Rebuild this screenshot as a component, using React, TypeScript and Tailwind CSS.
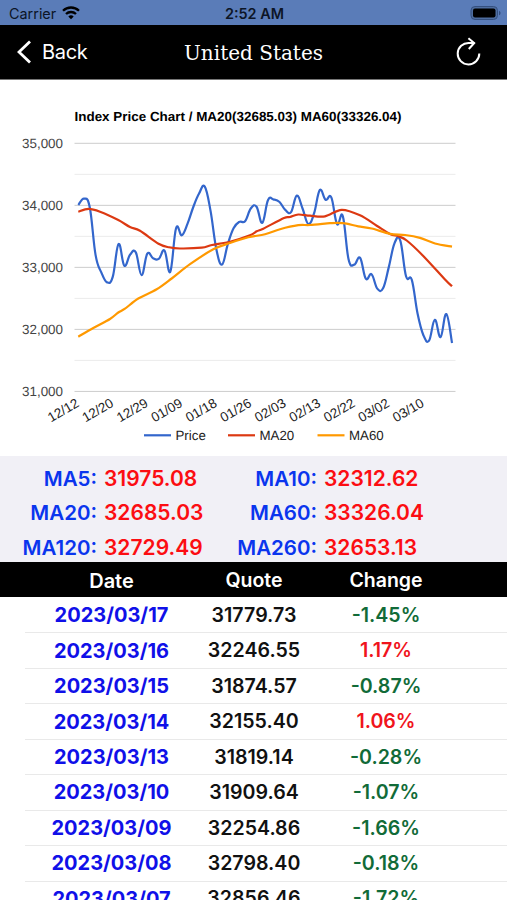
interface Quote {
  date: string;
  quote: string;
  change: string;
}

const averages = [
  ["MA5:", "31975.08", "MA10:", "32312.62"],
  ["MA20:", "32685.03", "MA60:", "33326.04"],
  ["MA120:", "32729.49", "MA260:", "32653.13"],
];

const quotes: Quote[] = [
  { date: "2023/03/17", quote: "31779.73", change: "-1.45%" },
  { date: "2023/03/16", quote: "32246.55", change: "1.17%" },
  { date: "2023/03/15", quote: "31874.57", change: "-0.87%" },
  { date: "2023/03/14", quote: "32155.40", change: "1.06%" },
  { date: "2023/03/13", quote: "31819.14", change: "-0.28%" },
  { date: "2023/03/10", quote: "31909.64", change: "-1.07%" },
  { date: "2023/03/09", quote: "32254.86", change: "-1.66%" },
  { date: "2023/03/08", quote: "32798.40", change: "-0.18%" },
  { date: "2023/03/07", quote: "32856.46", change: "-1.72%" },
];

// one close per trading day, 12/12 to 03/17
const closes = [
  34005, 34109, 33966, 33202, 32920, 32758, 32850, 33376, 33027, 33204, 33242,
  32876, 33221, 33147, 33136, 33270, 32930, 33631, 33518, 33704, 33973, 34190,
  34303, 33911, 33297, 33045, 33375, 33630, 33734, 33744, 33949, 33978, 33717,
  34086, 34093, 34054, 33926, 33891, 34157, 33949, 33700, 33869, 34246, 34089,
  34128, 33697, 33827, 33130, 33045, 33154, 32817, 32889, 32657, 32662, 33004,
  33391, 33431, 32856, 32798, 32255, 31910, 31819, 32155, 31875, 32247, 31780,
];

type Point = [number, number];

const ma20: Point[] = [
  [78.3, 211.7], [88.5, 208.9], [100, 211.7], [118.3, 220], [130, 227], [140, 230.7],
  [158.5, 243.7], [169, 247.3], [180, 248.5], [201.7, 247.7], [212, 245], [230, 241.7],
  [250, 235.3], [256.7, 231.3], [263.3, 228.7], [284, 218], [290, 217], [298.3, 214.5],
  [310, 215.7], [325, 216.3], [341.7, 209.8], [360, 215.3], [376.7, 225.7], [390, 234],
  [398.3, 236.3], [406.7, 240.5], [423, 255.7], [445, 279.5], [452, 286.3],
];

const ma60: Point[] = [
  [78.3, 336.7], [93.3, 328], [110, 319], [118.3, 312.5], [125, 308.7], [138.3, 298.5],
  [156.7, 289.3], [171.7, 278.5], [190, 264.2], [213.3, 249.3], [230, 243], [248.3, 237.3],
  [265, 234.3], [280, 229.2], [298.3, 225.2], [310, 225], [330, 223.2], [338, 222.8],
  [346.7, 223.7], [358.3, 226.3], [371.7, 228.5], [390, 233.8], [405, 235], [420, 237.9],
  [435, 243.5], [452, 246.7],
];

const months = ["12/12", "12/20", "12/29", "01/09", "01/18", "01/26", "02/03", "02/13", "02/22", "03/02", "03/10"];

const xAt = (i: number) => 78.3 + i * 5.75;
const yAt = (v: number) => 143.3 + (35000 - v) * 0.06203;

function smooth(pts: Point[], k: number) {
  let d = `M${pts[0][0]} ${pts[0][1]}`;
  for (let i = 0; i < pts.length - 1; i++) {
    const a = pts[i - 1] ?? pts[i];
    const b = pts[i];
    const c = pts[i + 1];
    const e = pts[i + 2] ?? c;
    d += `C${b[0] + (c[0] - a[0]) * k} ${b[1] + (c[1] - a[1]) * k} ${c[0] - (e[0] - b[0]) * k} ${c[1] - (e[1] - b[1]) * k} ${c[0]} ${c[1]}`;
  }
  return d;
}

function PriceChart() {
  const price = closes.map((v, i): Point => [xAt(i), yAt(v)]);
  const legend = [
    { x: 144, label: "Price", color: "#3366cc" },
    { x: 228, label: "MA20", color: "#dc3912" },
    { x: 317.5, label: "MA60", color: "#ff9900" },
  ];

  return (
    <svg
      viewBox="0 80 507 376"
      textRendering="geometricPrecision"
      className="block h-[376px] w-full shrink-0 bg-white font-['Liberation_Sans',Arial,sans-serif]"
    >
      <text x="74.5" y="120.7" fontSize="13.2" fontWeight="700" fill="#000" textLength="327" lengthAdjust="spacingAndGlyphs">
        Index Price Chart / MA20(32685.03) MA60(33326.04)
      </text>

      {[34500, 33500, 32500, 31500].map((v) => (
        <line key={v} x1="74.5" x2="455.5" y1={yAt(v)} y2={yAt(v)} stroke="#ebebeb" />
      ))}
      {[35000, 34000, 33000, 32000, 31000].map((v) => (
        <g key={v}>
          <line x1="74.5" x2="455.5" y1={yAt(v)} y2={yAt(v)} stroke="#cccccc" />
          <text x="63" y={yAt(v) + 5} fontSize="13.4" fill="#444" textAnchor="end">
            {v.toLocaleString("en-US")}
          </text>
        </g>
      ))}

      <g fill="none" strokeWidth="2.2">
        <path d={smooth(price, 0.2)} stroke="#3366cc" />
        <path d={smooth(ma20, 0.16)} stroke="#dc3912" />
        <path d={smooth(ma60, 0.16)} stroke="#ff9900" />
      </g>

      {months.map((m, i) => (
        <text
          key={m}
          fontSize="13.4"
          fill="#222"
          textAnchor="end"
          transform={`translate(${80 + i * 34.5} 405.8) rotate(-30)`}
        >
          {m}
        </text>
      ))}

      {legend.map(({ x, label, color }) => (
        <g key={label}>
          <line x1={x} x2={x + 27} y1="435.3" y2="435.3" stroke={color} strokeWidth="2.2" />
          <text x={x + 31.5} y="440.3" fontSize="13.3" fill="#222">
            {label}
          </text>
        </g>
      ))}
    </svg>
  );
}

function StatusBar() {
  return (
    <div className="grid h-[25px] shrink-0 grid-cols-3 items-center bg-[#5a7cb8] pt-[3px] pr-[6px] pl-[9px] text-[#0c1526]">
      <div className="flex items-center gap-[6px]">
        <span className="text-[14.4px] leading-none">Carrier</span>
        <svg viewBox="0 0 18 14" className="-mt-[2px] h-[14px] w-[18px]" fill="none" stroke="#000" strokeWidth="2.3">
          <path d="M1 4.8a11.4 11.4 0 0 1 16 0" />
          <path d="M4 8a7.2 7.2 0 0 1 10 0" />
          <path d="M9 13.3 6.3 10.5a3.9 3.9 0 0 1 5.4 0z" fill="#000" stroke="none" />
        </svg>
      </div>
      <span className="-ml-px text-center text-[14.4px] leading-none font-semibold whitespace-nowrap">2:52 AM</span>
      <svg viewBox="0 0 31 14" className="-mt-[2px] h-[14px] w-[31px] justify-self-end">
        <rect x="1" y=".5" width="26.5" height="13" rx="4" fill="#4e6d9f" stroke="#35507f" />
        <rect x="3" y="2.4" width="22.5" height="9.2" rx="2" fill="#000" />
        <path d="M29 4.7c2 .8 2 3.8 0 4.6z" fill="#35507f" />
      </svg>
    </div>
  );
}

function NavBar() {
  return (
    <div className="grid h-[55px] shrink-0 grid-cols-[1fr_auto_1fr] items-center border-b border-[#777] bg-black px-[17px] text-white">
      <div className="flex items-center gap-[11px]">
        <svg viewBox="0 0 14 24" className="h-6 w-[14px]" fill="none" stroke="#fff" strokeWidth="2.8">
          <path d="M13 1.5 2 12l11 10.5" />
        </svg>
        <span className="text-[20px] leading-none tracking-[-0.3px]">Back</span>
      </div>
      <h1 className="w-[141px] pt-[2px] text-center font-['DejaVu_Serif',serif] text-[20px] leading-none whitespace-nowrap">
        United States
      </h1>
      <svg viewBox="0 0 26 30" className="mr-[8px] h-[30px] w-[26px] justify-self-end" fill="none" stroke="#fff" strokeWidth="2">
        <path d="M18.5 5.9H13A10.8 10.8 0 1 0 23.3 16.6" />
        <path d="M12.4 1.2 18.2 6l-5.4 6" />
      </svg>
    </div>
  );
}

export default function App() {
  return (
    <div className="flex h-[900px] w-[507px] flex-col overflow-hidden bg-white font-['Inter',sans-serif]">
      <StatusBar />
      <NavBar />
      <PriceChart />

      <div className="flex h-[106px] shrink-0 flex-col bg-[#f1f0f6] pt-[5px] text-[21px] font-semibold">
        {averages.map(([leftLabel, leftValue, rightLabel, rightValue]) => (
          <div key={leftLabel} className="grid h-[34.5px] shrink-0 grid-cols-[97px_123px_97px_1fr] items-center leading-none">
            <span className="pt-px text-right text-[20.5px] text-[#0a35ee]">{leftLabel}</span>
            <span className="pl-[7px] text-[#fc0d12]">{leftValue}</span>
            <span className="pt-px text-right text-[20.5px] text-[#0a35ee]">{rightLabel}</span>
            <span className="pl-[7px] text-[#fc0d12]">{rightValue}</span>
          </div>
        ))}
      </div>

      <div className="grid h-[35px] shrink-0 grid-cols-[25px_173px_112px_152px] items-center bg-black pt-[2px] text-center text-[19.5px] leading-none font-semibold text-white">
        <span className="col-start-2 text-[20px]">Date</span>
        <span>Quote</span>
        <span>Change</span>
      </div>

      <div className="flex flex-col pt-px pl-[25px]">
        {quotes.map(({ date, quote, change }) => (
          <div
            key={date}
            className="grid h-[35.45px] shrink-0 grid-cols-[173px_112px_152px] items-center border-b border-[#e9e9e9] text-center leading-none font-semibold"
          >
            <span className="text-[20px] font-bold text-[#1010e8]">{date}</span>
            <span className="pt-px text-[19.6px] text-[#111]">{quote}</span>
            <span className={`pt-px text-[19.6px] ${change.startsWith("-") ? "text-[#116b38]" : "text-[#f0141c]"}`}>
              {change}
            </span>
          </div>
        ))}
      </div>
    </div>
  );
}
